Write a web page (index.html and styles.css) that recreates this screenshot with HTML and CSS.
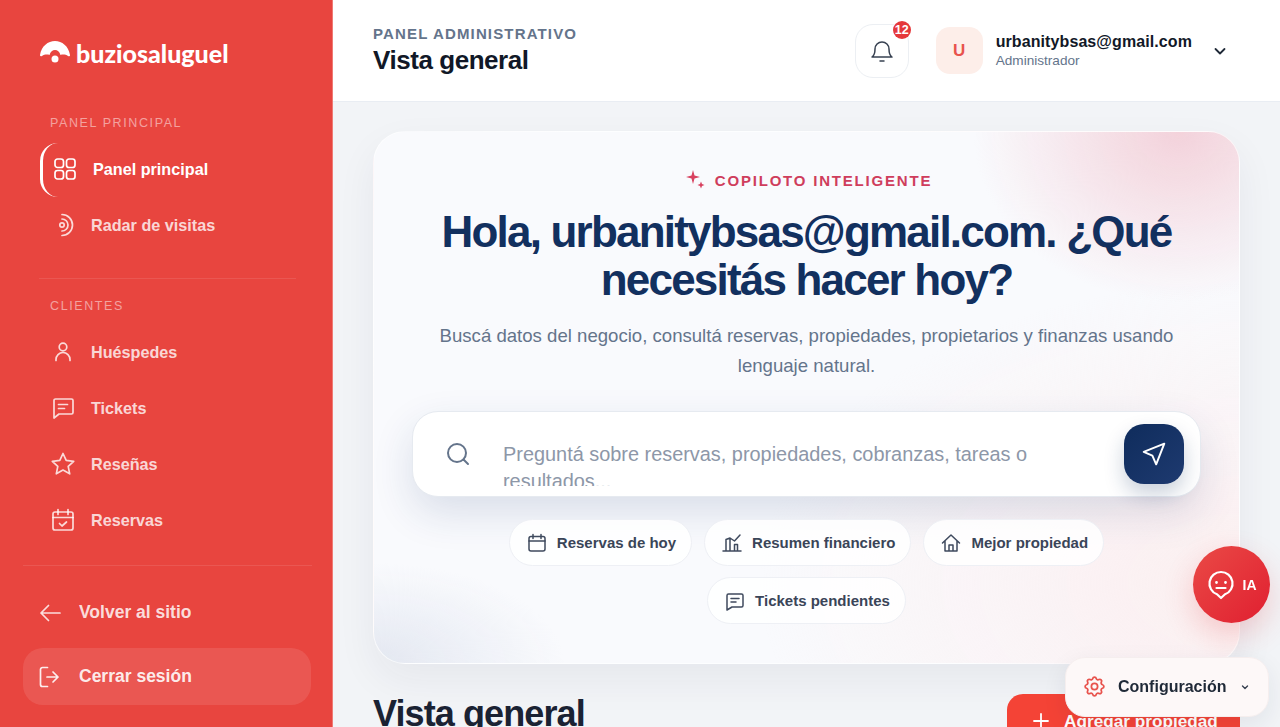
FILE: index.html
```html
<!DOCTYPE html>
<html lang="es">
<head>
  <meta charset="UTF-8">
  <meta name="viewport" content="width=device-width, initial-scale=1.0">
  <title>buziosaluguel - Panel administrativo</title>
  <link rel="stylesheet" href="styles.css">
</head>
<body>
  <aside class="sidebar">
    <div class="brand">
      <svg class="brand-mark" width="32" height="24" viewBox="0 0 32 24">
        <path d="M0 14C1.500 5 8 0 15 0S28.500 5 30 14c.2 1.200-1 1.500-2 .9-2-1.300-5-1.800-7.500-1C19.500 10.500 17.500 9 15 9s-4.500 1.500-5.500 4.900c-2.500-.8-5.500-.3-7.500 1-1 .6-2.200.3-2-.9z" fill="#fff"/>
        <circle cx="15" cy="18" r="3.500" fill="#fff"/>
      </svg>
      <span class="brand-name">buziosaluguel</span>
    </div>

    <div class="nav-label">PANEL PRINCIPAL</div>
    <a class="nav-item active" href="#">
      <svg class="icon" viewBox="0 0 24 24"><rect x="2" y="2" width="8.500" height="8.500" rx="2.500"/><rect x="13.500" y="2" width="8.500" height="8.500" rx="2.500"/><rect x="2" y="13.500" width="8.500" height="8.500" rx="2.500"/><rect x="13.500" y="13.500" width="8.500" height="8.500" rx="2.500"/></svg>
      Panel principal
    </a>
    <a class="nav-item" href="#">
      <svg class="icon" viewBox="0 0 24 24"><circle cx="11" cy="12" r="2.200"/><path d="M11 6a6 6 0 0 1 0 12"/><path d="M11 1.500a10.500 10.500 0 0 1 0 21"/></svg>
      Radar de visitas
    </a>
    <div class="nav-divider"></div>

    <div class="nav-label">CLIENTES</div>
    <a class="nav-item" href="#">
      <svg class="icon" viewBox="0 0 24 24"><circle cx="12" cy="7" r="3.800"/><path d="M5 20.500v-1a7 7 0 0 1 14 0v1"/></svg>
      Huéspedes
    </a>
    <a class="nav-item" href="#">
      <svg class="icon" viewBox="0 0 24 24"><path d="M4.500 3h16a1.500 1.500 0 0 1 1.500 1.500v12a1.500 1.500 0 0 1-1.500 1.500H8l-5 4V4.500A1.500 1.500 0 0 1 4.500 3z"/><path d="M7.500 8.500h9M7.500 12.500h6"/></svg>
      Tickets
    </a>
    <a class="nav-item" href="#">
      <svg class="icon" viewBox="0 0 24 24"><path d="M12 1.500l3.200 6.900 7.500.9-5.500 5.100 1.500 7.400-6.700-3.700-6.700 3.700 1.500-7.400-5.500-5.100 7.500-.9z"/></svg>
      Reseñas
    </a>
    <a class="nav-item" href="#">
      <svg class="icon" viewBox="0 0 24 24"><rect x="2" y="4" width="20" height="18" rx="2"/><path d="M2 9.500h20M7 1.500v5M17 1.500v5M8.500 15.500l2.500 2.500 4.500-4"/></svg>
      Reservas
    </a>
    <div class="nav-divider wide"></div>

    <a class="bottom-item" href="#">
      <svg class="icon" viewBox="0 0 24 24"><path d="M21 12H2M9.500 4.500L2 12l7.500 7.500"/></svg>
      Volver al sitio
    </a>
    <a class="bottom-item logout" href="#">
      <svg class="icon" viewBox="0 0 24 24"><path d="M8.500 2.500H3.500a2 2 0 0 0-2 2v15a2 2 0 0 0 2 2h5M8 12h11M14 7l5 5-5 5"/></svg>
      Cerrar sesión
    </a>
  </aside>

  <main class="main">
    <header class="topbar">
      <div class="topbar-title">
        <div class="eyebrow">PANEL ADMINISTRATIVO</div>
        <h1 class="page-title">Vista general</h1>
      </div>
      <button class="bell">
        <svg width="24" height="24" viewBox="0 0 24 24" fill="none" stroke="#374151" stroke-width="1.500" stroke-linecap="round" stroke-linejoin="round"><path d="M5 10a7 7 0 0 1 14 0c0 6 3 8 3 8H2s3-2 3-8z"/><path d="M10 22h4"/></svg>
        <span class="badge">12</span>
      </button>
      <div class="avatar">U</div>
      <div class="user">
        <div class="user-mail">urbanitybsas@gmail.com</div>
        <div class="user-role">Administrador</div>
      </div>
      <svg class="user-caret" width="16" height="16" viewBox="0 0 16 16" fill="none" stroke="#1f2937" stroke-width="1.800" stroke-linecap="round" stroke-linejoin="round"><path d="M3.500 6l4.500 4.500L12.500 6"/></svg>
    </header>

    <div class="content">
      <section class="hero">
        <div class="hero-tag">
          <svg width="20" height="20" viewBox="0 0 20 20" fill="#d8415f"><path d="M7 0l1.500 5.500L14 7l-5.500 1.500L7 14 5.500 8.500 0 7l5.500-1.500z"/><path d="M15 11.500l1 2.500 2.500 1-2.500 1-1 2.500-1-2.500-2.500-1 2.500-1z"/></svg>
          COPILOTO INTELIGENTE
        </div>
        <h2 class="hero-title">Hola, urbanitybsas@gmail.com. ¿Qué necesitás hacer hoy?</h2>
        <p class="hero-text">Buscá datos del negocio, consultá reservas, propiedades, propietarios y finanzas usando lenguaje natural.</p>

        <div class="ask">
          <svg class="ask-icon" width="24" height="24" viewBox="0 0 24 24" fill="none" stroke="#64748b" stroke-width="2" stroke-linecap="round"><circle cx="11" cy="11" r="9"/><path d="M22 22l-4.500-4.500"/></svg>
          <textarea class="ask-input" rows="2" placeholder="Preguntá sobre reservas, propiedades, cobranzas, tareas o resultados..."></textarea>
          <button class="ask-send">
            <svg width="26" height="26" viewBox="0 0 24 24" fill="none" stroke="#fff" stroke-width="1.800" stroke-linecap="round" stroke-linejoin="round"><path d="M21.500 2.500L2.500 10l8 3.500 3.500 8z"/></svg>
          </button>
        </div>

        <div class="chips">
          <button class="chip">
            <svg class="chip-icon" viewBox="0 0 20 20"><rect x="2" y="3.500" width="16" height="14.500" rx="2"/><path d="M2 8h16M6 1.500v4M14 1.500v4"/></svg>
            Reservas de hoy
          </button>
          <button class="chip">
            <svg class="chip-icon" viewBox="0 0 20 20"><path d="M1 18h18M4 18V6.500M8 18V5L4 6.500M12.500 18v-6.500h3V18M8 5l4.500 3L18 2"/></svg>
            Resumen financiero
          </button>
          <button class="chip">
            <svg class="chip-icon" viewBox="0 0 20 20"><path d="M1.500 10L10 2l8.500 8M4 8v10h12V8M8 18v-6h4v6"/></svg>
            Mejor propiedad
          </button>
          <button class="chip">
            <svg class="chip-icon" viewBox="0 0 20 20"><path d="M3.500 3h13A1.500 1.500 0 0 1 18 4.500v10a1.500 1.500 0 0 1-1.500 1.500H7l-5 3V4.500A1.500 1.500 0 0 1 3.500 3z"/><path d="M6 7.500h8M6 11h5"/></svg>
            Tickets pendientes
          </button>
        </div>
      </section>

      <div class="section-head">
        <h2 class="section-title">Vista general</h2>
        <button class="add-btn">
          <svg width="20" height="20" viewBox="0 0 20 20" fill="none" stroke="#fff" stroke-width="1.800" stroke-linecap="round"><path d="M10 3v14M3 10h14"/></svg>
          Agregar propiedad
        </button>
      </div>
    </div>
  </main>

  <button class="ia-btn">
    <svg width="28" height="30" viewBox="0 0 28 30" fill="none" stroke="#fff" stroke-width="2.200" stroke-linecap="round" stroke-linejoin="round"><path d="M14 2a11.500 11.500 0 0 1 4 22.300L14 28l-4-3.700A11.500 11.500 0 0 1 14 2z"/><path d="M9.500 18h9"/><path d="M9.500 12.500v.1M18.500 12.500v.1" stroke-width="2.800"/></svg>
    IA
  </button>

  <button class="config">
    <svg width="25" height="25" viewBox="0 0 24 24" fill="none" stroke="#e8534d" stroke-width="1.700" stroke-linecap="round" stroke-linejoin="round"><path d="M10.325 4.317c.426-1.756 2.924-1.756 3.350 0a1.724 1.724 0 0 0 2.573 1.066c1.543-.94 3.310.826 2.370 2.370a1.724 1.724 0 0 0 1.065 2.572c1.756.426 1.756 2.924 0 3.350a1.724 1.724 0 0 0-1.066 2.573c.94 1.543-.826 3.310-2.370 2.370a1.724 1.724 0 0 0-2.572 1.065c-.426 1.756-2.924 1.756-3.350 0a1.724 1.724 0 0 0-2.573-1.066c-1.543.94-3.310-.826-2.370-2.370a1.724 1.724 0 0 0-1.065-2.572c-1.756-.426-1.756-2.924 0-3.350a1.724 1.724 0 0 0 1.066-2.573c-.94-1.543.826-3.310 2.370-2.370 1 .608 2.296.07 2.572-1.065z"/><circle cx="12" cy="12" r="3"/></svg>
    <span class="config-text">Configuración</span>
    <svg width="10" height="10" viewBox="0 0 10 10" fill="none" stroke="#374151" stroke-width="1.400" stroke-linecap="round" stroke-linejoin="round"><path d="M2.500 4l2.500 2.500L7.500 4"/></svg>
  </button>
</body>
</html>
```

FILE: styles.css
```css
* {
  margin: 0;
  padding: 0;
  box-sizing: border-box;
}

html, body {
  height: 727px;
  overflow: hidden;
}

body {
  display: flex;
  font-family: 'Liberation Sans', Arial, sans-serif;
  background-color: #f2f4f7;
  color: #111827;
}

button {
  font-family: inherit;
  cursor: pointer;
}

a {
  text-decoration: none;
}

/* sidebar */
.sidebar {
  display: flex;
  flex-direction: column;
  width: 333px;
  flex-shrink: 0;
  height: 727px;
  background-color: #e8453f;
  padding: 41px 21px 0 23px;
  border-right: 1px solid #f07a74;
}

.brand {
  display: flex;
  align-items: center;
  gap: 4px;
  height: 24px;
  margin-left: 17px;
  margin-bottom: 51px;
}

.brand-name {
  font-family: 'Lato', sans-serif;
  font-weight: 900;
  font-size: 25px;
  color: #fff;
}

.nav-label {
  font-size: 12.500px;
  line-height: 14px;
  letter-spacing: 1.600px;
  color: rgba(255,255,255,0.5);
  margin-left: 27px;
  margin-bottom: 11px;
}

.nav-item {
  display: flex;
  align-items: center;
  gap: 16px;
  height: 56px;
  margin-left: 17px;
  padding-left: 11px;
  font-size: 16.200px;
  font-weight: 700;
  color: rgba(255,255,255,0.8);
}

.nav-item.active {
  color: #fff;
  padding-left: 10px;
  padding-bottom: 2px;
  margin-top: 2px;
  height: 54px;
  border-left: 3px solid #fff;
  border-radius: 18px;
}

.icon {
  width: 24px;
  height: 24px;
  flex-shrink: 0;
  fill: none;
  stroke: currentColor;
  stroke-width: 1.700;
  stroke-linecap: round;
  stroke-linejoin: round;
}

.nav-divider {
  height: 1px;
  width: 257px;
  flex-shrink: 0;
  margin: 25px 0 20px 16px;
  background-color: rgba(255,255,255,0.1);
}

.nav-divider.wide {
  width: 289px;
  margin: 17px 0 18px 0;
}

.bottom-item {
  display: flex;
  align-items: center;
  gap: 16px;
  height: 57px;
  padding-left: 16px;
  font-size: 17.500px;
  font-weight: 700;
  color: rgba(255,255,255,0.82);
}

.bottom-item.logout {
  margin-top: 7px;
  color: rgba(255,255,255,0.9);
  background-color: rgba(255,255,255,0.1);
  border-radius: 20px;
}

/* topbar */
.main {
  flex: 1;
  min-width: 0;
  display: flex;
  flex-direction: column;
  height: 727px;
  overflow: hidden;
}

.topbar {
  display: flex;
  align-items: center;
  flex-shrink: 0;
  height: 102px;
  padding: 0 52px 0 40px;
  background-color: #fff;
  border-bottom: 1px solid #e9edf3;
}

.topbar-title {
  flex: 1;
}

.eyebrow {
  font-size: 15px;
  font-weight: 700;
  letter-spacing: 1.150px;
  color: #64748b;
  line-height: 18px;
}

.page-title {
  font-size: 26px;
  font-weight: 700;
  letter-spacing: -0.450px;
  line-height: 34px;
  color: #111827;
}

.bell {
  position: relative;
  width: 54px;
  height: 54px;
  display: flex;
  align-items: center;
  justify-content: center;
  background-color: #fff;
  border: 1px solid #eceff3;
  border-radius: 18px;
  margin-right: 27px;
}

.badge {
  position: absolute;
  top: -4px;
  right: -3px;
  width: 18px;
  height: 18px;
  border-radius: 50%;
  background-color: #e5383b;
  color: #fff;
  font-size: 12.500px;
  font-weight: 700;
  line-height: 18px;
  text-align: center;
}

.avatar {
  width: 47px;
  height: 47px;
  border-radius: 14px;
  background-color: #fdeee9;
  color: #e8534d;
  font-size: 17px;
  font-weight: 700;
  display: flex;
  align-items: center;
  justify-content: center;
  margin-right: 13px;
}

.user {
  margin-right: 20px;
}

.user-mail {
  font-size: 16px;
  letter-spacing: 0.090px;
  font-weight: 700;
  line-height: 20px;
  color: #111827;
}

.user-role {
  font-size: 13.600px;
  line-height: 18px;
  color: #64748b;
}

/* main card */
.content {
  padding: 29px 40px 0 40px;
}

.hero {
  height: 533px;
  border: 1px solid rgba(255,255,255,0.7);
  border-radius: 32px;
  padding: 35px 38px 0 38px;
  text-align: center;
  box-shadow: 0 16px 40px rgba(30,40,70,0.06);
  background:
    radial-gradient(ellipse 205px 170px at 93% 0%, rgba(243,208,217,0.95), rgba(243,208,217,0) 100%),
    radial-gradient(ellipse 480px 300px at 100% 85%, rgba(253,232,232,0.65), rgba(253,232,232,0) 100%),
    radial-gradient(ellipse 190px 100px at 0% 100%, rgba(222,227,238,0.8), rgba(222,227,238,0) 100%),
    #f9fafd;
}

.hero-tag {
  display: flex;
  align-items: center;
  justify-content: center;
  gap: 9px;
  height: 26px;
  padding-left: 5px;
  font-size: 15px;
  font-weight: 700;
  letter-spacing: 1.800px;
  color: #cf3d5c;
  margin-bottom: 15px;
}

.hero-title {
  font-size: 44px;
  font-weight: 700;
  letter-spacing: -1.800px;
  line-height: 48px;
  color: #12305f;
  margin-bottom: 17px;
}

.hero-text {
  font-size: 18.600px;
  line-height: 30px;
  color: #64748b;
  padding: 0 20px;
  margin-bottom: 30px;
}

.ask {
  display: flex;
  align-items: flex-start;
  height: 86px;
  background-color: #fff;
  border: 1px solid #e6eaf0;
  border-radius: 26px;
  padding: 12px 16px 0 33px;
  box-shadow: 0 16px 40px rgba(30,58,112,0.14);
  margin-bottom: 22px;
}

.ask-icon {
  flex-shrink: 0;
  margin-top: 18px;
  margin-right: 33px;
}

.ask-input {
  flex: 1;
  min-width: 0;
  height: 45px;
  margin-top: 17px;
  margin-right: 16px;
  border: none;
  outline: none;
  resize: none;
  overflow: hidden;
  background: transparent;
  font-family: inherit;
  font-size: 19.900px;
  line-height: 27px;
}

.ask-input::placeholder {
  color: #8d97a8;
  opacity: 1;
}

.ask-send {
  flex-shrink: 0;
  width: 60px;
  height: 60px;
  display: flex;
  align-items: center;
  justify-content: center;
  border: none;
  border-radius: 20px;
  background: linear-gradient(135deg, #0f2c5c, #1e3a70);
  box-shadow: 0 10px 20px rgba(18,48,95,0.22);
}

.chips {
  display: flex;
  flex-wrap: wrap;
  justify-content: center;
  gap: 11px 12px;
  padding: 0 60px;
}

.chip {
  display: flex;
  align-items: center;
  gap: 10px;
  height: 47px;
  padding: 0 15px 0 17px;
  background-color: rgba(255,255,255,0.85);
  border: 1px solid #eef0f5;
  border-radius: 24px;
  font-size: 15px;
  font-weight: 700;
  color: #3a4558;
}

.chip-icon {
  width: 20px;
  height: 20px;
  fill: none;
  stroke: #3f4a5e;
  stroke-width: 1.500;
  stroke-linecap: round;
  stroke-linejoin: round;
}

/* under the card */
.section-head {
  display: flex;
  justify-content: space-between;
  align-items: flex-start;
  margin-top: 30px;
}

.section-title {
  font-size: 36px;
  font-weight: 700;
  letter-spacing: -0.900px;
  line-height: 40px;
  color: #1a2233;
}

.add-btn {
  display: flex;
  align-items: center;
  justify-content: center;
  gap: 13px;
  width: 233px;
  height: 54px;
  padding-left: 2px;
  border: none;
  border-radius: 16px;
  background-color: #f44336;
  color: #fff;
  font-size: 17.200px;
  font-weight: 700;
}

/* floating things */
.ia-btn {
  position: fixed;
  left: 1193px;
  top: 546px;
  width: 77px;
  height: 77px;
  display: flex;
  align-items: center;
  justify-content: center;
  gap: 8px;
  border: none;
  border-radius: 50%;
  background: linear-gradient(135deg, #ea4a46, #e01f30);
  box-shadow: 0 12px 30px rgba(229,56,59,0.22);
  color: #fff;
  font-size: 14px;
  font-weight: 700;
}

.config {
  position: fixed;
  left: 1065px;
  top: 657px;
  width: 204px;
  height: 60px;
  display: flex;
  align-items: center;
  padding: 0 0 1px 16px;
  border: 1px solid #f5eeee;
  border-radius: 20px;
  background-color: #fdf8f8;
  box-shadow: 0 8px 24px rgba(30,40,60,0.08);
}

.config-text {
  font-size: 16px;
  font-weight: 700;
  color: #1f2937;
  margin-left: 11px;
  margin-right: 14px;
}
```
